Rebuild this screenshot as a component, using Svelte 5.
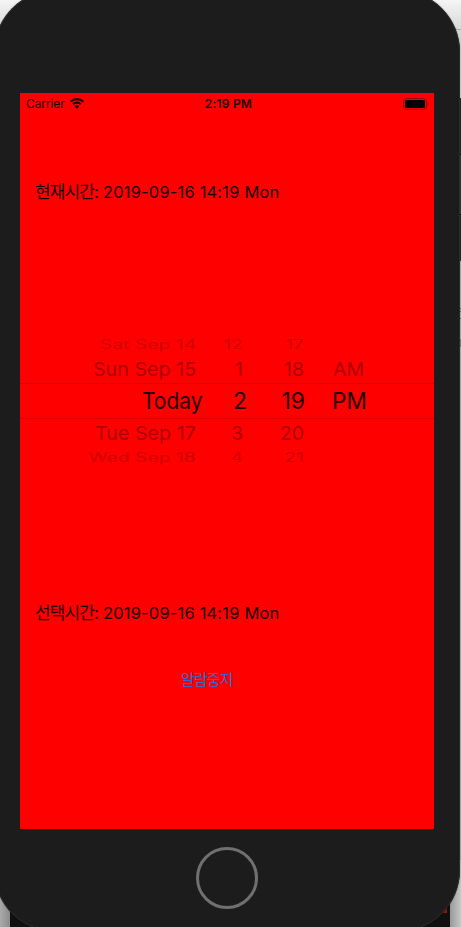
<script>
  const rows = [
    { kind: 'far top', cells: ['Sat Sep 14', '12', '17', ''] },
    { kind: 'near above', cells: ['Sun Sep 15', '1', '18', 'AM'] },
    { kind: 'current', cells: ['Today', '2', '19', 'PM'] },
    { kind: 'near below', cells: ['Tue Sep 17', '3', '20', ''] },
    { kind: 'far bottom', cells: ['Wed Sep 18', '4', '21', ''] }
  ];
  const stamp = '2019-09-16 14:19 Mon';
</script>

<div class="desktop">
  <svg class="backdrop" width="461" height="927" aria-hidden="true">
    <defs>
      <linearGradient id="bar" x2="0" y2="1"><stop stop-color="#f5f5f5" /><stop offset="1" stop-color="#d8d8d8" /></linearGradient>
      <linearGradient id="shadeL"><stop stop-color="#aaa" /><stop offset="1" stop-color="#8c8c8c" /></linearGradient>
      <linearGradient id="shadeR"><stop stop-color="#999" /><stop offset="1" stop-color="#c8c8c8" /></linearGradient>
    </defs>
    <rect width="461" height="927" fill="#b4b4b4" />
    <rect width="461" height="30" fill="url(#bar)" />
    <rect x="440" y="29" width="21" height="1" fill="#aaa" />
    <rect x="440" y="30" width="21" height="68" fill="#d5d5d5" />
    <rect x="459" y="98" width="2" height="163" fill="#292929" />
    <rect x="459" y="154" width="2" height="1" fill="#000" />
    <rect x="459" y="155" width="2" height="59" fill="#3a3a3a" />
    <rect x="459" y="214" width="2" height="1" fill="#000" />
    <path d="M460 308.500h1M460 311.500h1M460 318.500h1M460 340h1v6h-1" stroke="#666" fill="none" />
    <rect y="880" width="10" height="47" fill="url(#shadeL)" />
    <rect x="10" y="880" width="440" height="47" fill="#101010" />
    <rect x="440" y="900" width="7" height="13" fill="#a40e0e" />
    <rect x="450" y="860" width="11" height="67" fill="url(#shadeR)" />
  </svg>

  <div class="phone">
    <main class="screen">
      <header>
        <div class="carrier">
          <span>Carrier</span>
          <svg width="14" height="11" viewBox="0 0 14 11">
            <path d="M.7 3.8C4.3.3 9.7.3 13.3 3.8" fill="none" stroke="#180000" stroke-width="2.2" />
            <path d="M3 6.300c2.400-2.200 5.600-2.200 8 0" fill="none" stroke="#180000" stroke-width="2" />
            <path d="M4.700 8.300c1.300-1.300 3.300-1.300 4.600 0L7 10.700z" fill="#180000" />
          </svg>
        </div>
        <span class="clock">2:19 PM</span>
        <svg class="battery" width="26" height="12" viewBox="0 0 26 12">
          <rect x=".6" y=".6" width="22.8" height="10.8" rx="2.8" fill="none" stroke="#a00000" />
          <rect x="2" y="2" width="20" height="8" rx="1.2" fill="#000" />
          <path d="M24.5 4.2c1.300.5 1.300 3.100 0 3.600z" fill="#a00000" />
        </svg>
      </header>

      <p class="label now"><span class="ko">현재시간:</span> <span class="stamp">{stamp}</span></p>

      <section class="picker">
        {#each rows as row}
          <div class="row {row.kind}">
            {#each row.cells as cell, i}
              <div class="cell c{i}"><span>{cell}</span></div>
            {/each}
          </div>
        {/each}
      </section>

      <p class="label chosen"><span class="ko">선택시간:</span> <span class="stamp">{stamp}</span></p>
      <button>알람중지</button>
    </main>
    <div class="home"></div>
  </div>
</div>

<style>
  :global(body) { margin: 0; }
  .desktop {
    position: relative;
    width: 461px;
    height: 927px;
    overflow: hidden;
    font-family: Inter, "Noto Sans CJK KR", sans-serif;
  }
  .backdrop { position: absolute; inset: 0; }
  .phone {
    position: relative;
    box-sizing: border-box;
    width: 466px;
    height: 942px;
    margin: -10px 0 0 -6px;
    padding: 103px 26px 0;
    border-radius: 62px;
    background: #1c1c1c;
    box-shadow: inset 0 0 0 1px #2c2c2c, 0 0 2px #0005;
  }
  .screen {
    display: flex;
    flex-direction: column;
    width: 414px;
    height: 736px;
    background: #f00;
    overflow: hidden;
  }
  header {
    display: grid;
    grid-template-columns: 1fr auto 1fr;
    align-items: center;
    box-sizing: border-box;
    height: 20px;
    padding: 0 5px 0 6px;
    font-size: 12px;
    line-height: 20px;
    color: #180000;
  }
  .carrier { display: flex; align-items: center; gap: 5px; letter-spacing: -.1px; padding-top: 1px; }
  .carrier svg { margin-top: -2px; }
  .clock { font-weight: 600; padding-top: 1px; padding-left: 2px; letter-spacing: .2px; }
  .battery { justify-self: end; }
  .label {
    display: flex;
    gap: 5px;
    align-items: baseline;
    height: 24px;
    margin: 0 0 0 15px;
    line-height: 24px;
    font-size: 16.5px;
    color: #180000;
    white-space: nowrap;
  }
  .ko { font-size: 17px; letter-spacing: -.9px; }
  .stamp { letter-spacing: .17px; }
  .now { margin-top: 67px; }
  .picker {
    display: flex;
    flex-direction: column;
    height: 130px;
    margin-top: 130px;
  }
  .row {
    display: grid;
    grid-template-columns: 176px 47px 61px 100px;
    align-items: center;
    flex: none;
    color: #ac0000;
    white-space: nowrap;
  }
  .cell { display: flex; justify-content: flex-end; }
  .c3 { justify-content: flex-start; padding-left: 29px; }
  .cell span { display: block; transform-origin: right center; }
  .c3 span { transform-origin: left center; }
  .near { height: 28px; font-size: 19.5px; line-height: 28px; }
  .near span { transform: scaleY(.96); }
  .near .c0 span { transform: scale(1.01, .96); }
  .above { padding-top: 1px; height: 28px; }
  .below { height: 27px; }
  .far { height: 20px; font-size: 18.5px; line-height: 20px; color: #d00000; }
  .far span { transform: scale(1.045, .67); }
  .bottom { padding-top: 1px; }
  .current {
    box-sizing: border-box;
    height: 36px;
    grid-template-columns: 182px 45px 58px 100px;
    border-top: 1px solid #dc0000;
    border-bottom: 1px solid #dc0000;
    font-size: 23px;
    line-height: 34px;
    color: #260000;
  }
  .current .c0 span { transform: scaleX(.91); }
  .current .c3 { padding-left: 27px; }
  .current .c3 span { transform: scaleX(.98); }
  .chosen { margin-top: 137px; }
  button {
    align-self: flex-start;
    height: 24px;
    margin: 42px 0 0 161px;
    padding: 0;
    border: 0;
    background: none;
    font: 15px/24px "Noto Sans CJK KR", sans-serif;
    letter-spacing: -.85px;
    color: #3268c8;
  }
  .home {
    box-sizing: border-box;
    width: 62px;
    height: 62px;
    margin: 18px auto 0;
    border: 3px solid #707070;
    border-radius: 50%;
  }
</style>
